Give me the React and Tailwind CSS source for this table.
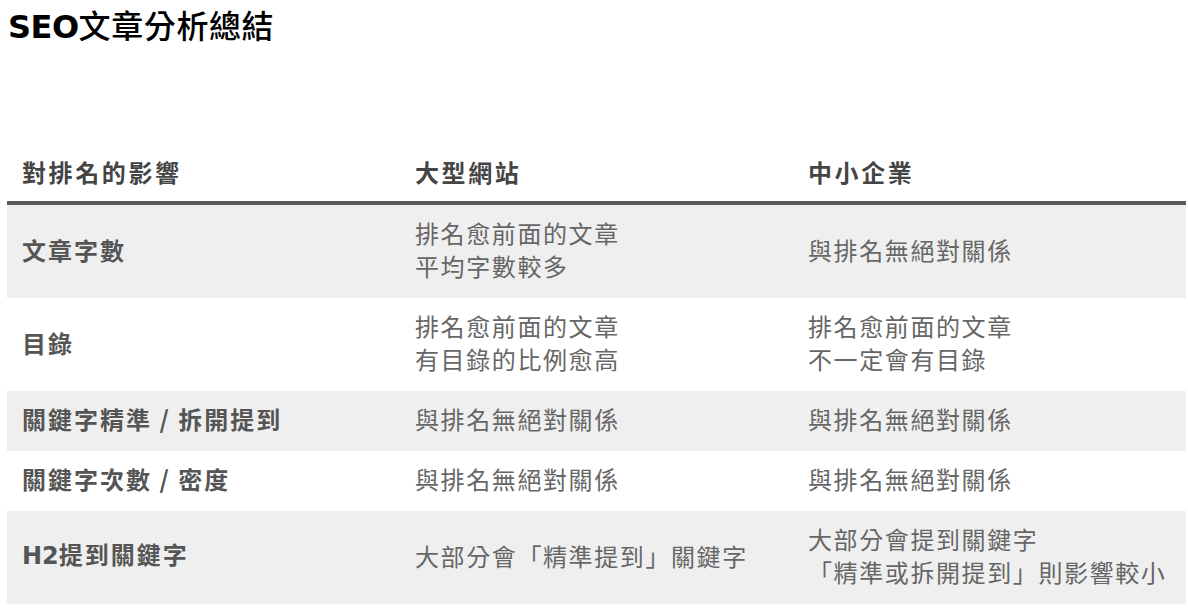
const rows = [
  {
    label: "文章字數",
    big: ["排名愈前面的文章", "平均字數較多"],
    small: ["與排名無絕對關係"],
  },
  {
    label: "目錄",
    big: ["排名愈前面的文章", "有目錄的比例愈高"],
    small: ["排名愈前面的文章", "不一定會有目錄"],
  },
  {
    label: "關鍵字精準 / 拆開提到",
    big: ["與排名無絕對關係"],
    small: ["與排名無絕對關係"],
  },
  {
    label: "關鍵字次數 / 密度",
    big: ["與排名無絕對關係"],
    small: ["與排名無絕對關係"],
  },
  {
    label: "H2提到關鍵字",
    big: ["大部分會「精準提到」關鍵字"],
    small: ["大部分會提到關鍵字", "「精準或拆開提到」則影響較小"],
  },
]

const cjk = { fontFamily: '"Noto Sans CJK TC", "Noto Sans", sans-serif' }
const latin = { fontFamily: '"DejaVu Sans", sans-serif' }

export default function App() {
  return (
    <div className="min-h-screen bg-white" style={cjk}>
      <h1 className="pl-2 pt-[3px] text-[32px] leading-[42px] text-black">
        <span className="font-bold tracking-[-0.5px]" style={latin}>SEO</span>
        <span className="font-medium tracking-[0.6px]">文章分析總結</span>
      </h1>

      <table className="ml-[7px] mt-[95px] w-[1179px] table-fixed border-collapse text-[24px] tracking-[1.6px]">
        <thead>
          <tr className="border-b-4 border-[#5a5a5a]">
            <th className="px-[15px] pt-[12px] pb-[13px] text-left align-middle font-bold leading-[33px] tracking-[2.6px] text-[#454545]">對排名的影響</th>
            <th className="px-[15px] pt-[12px] pb-[13px] text-left align-middle font-bold leading-[33px] tracking-[2.6px] text-[#454545]">大型網站</th>
            <th className="px-[15px] pt-[12px] pb-[13px] text-left align-middle font-bold leading-[33px] tracking-[2.6px] text-[#454545]">中小企業</th>
          </tr>
        </thead>
        <tbody>
          {rows.map((r, i) => (
            <tr key={r.label} className={i % 2 === 0 ? "bg-[#efefef]" : "bg-white"}>
              <td className="px-[15px] pt-[11px] pb-[16px] align-middle font-bold leading-[33px] tracking-[2px] text-[#555555]">
                {r.label.startsWith("H2") ? (
                  <>
                    <span style={latin} className="tracking-normal">H2</span>
                    {r.label.slice(2)}
                  </>
                ) : (
                  r.label
                )}
              </td>
              <td className="px-[15px] pt-[11px] pb-[16px] align-middle leading-[33px] text-[#666666]">
                {r.big.map((t) => (
                  <div key={t} className="whitespace-nowrap">{t}</div>
                ))}
              </td>
              <td className="px-[15px] pt-[11px] pb-[16px] align-middle leading-[33px] text-[#666666]">
                {r.small.map((t) => (
                  <div key={t} className="whitespace-nowrap">{t}</div>
                ))}
              </td>
            </tr>
          ))}
        </tbody>
      </table>
    </div>
  )
}
